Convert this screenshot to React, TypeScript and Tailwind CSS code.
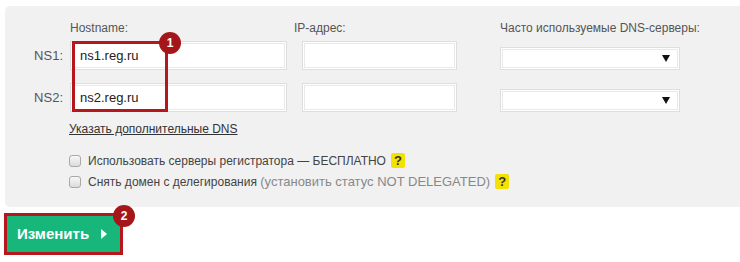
const font = { fontFamily: '"Liberation Sans", Arial, sans-serif' };

function TextInput({ w, value }: { w: string; value?: string }) {
  return (
    <div
      className={`${w} h-[29px] border border-[#dedede] bg-white shadow-[inset_0_0_0_1px_#fff,inset_0_0_0_2px_#e9e9e9] flex items-center pl-[9px] text-[13px] text-[#222]`}
    >
      {value}
    </div>
  );
}

function DnsSelect() {
  return (
    <div className="w-[180px] h-[23px] border border-[#dedede] bg-white shadow-[inset_0_0_0_1px_#fff,inset_0_0_0_2px_#e9e9e9] flex items-center justify-end pr-[9px]">
      <svg width="8" height="7" viewBox="0 0 8 7">
        <path d="M0 0 H8 L4 7 Z" fill="#111" />
      </svg>
    </div>
  );
}

function Badge({ n }: { n: string }) {
  return (
    <div className="w-[22px] h-[22px] rounded-full bg-[#a5161b] text-white text-[12px] font-bold flex items-center justify-center">
      {n}
    </div>
  );
}

function Help() {
  return (
    <span className="inline-flex items-center justify-center w-[14px] h-[15px] rounded-[2px] bg-[#f3e200] text-[#333] text-[13px] font-bold ml-[5px]">
      ?
    </span>
  );
}

function Check() {
  return (
    <span className="w-[12px] h-[12px] rounded-[3px] border border-[#a9a9a9] bg-gradient-to-b from-[#f7f7f7] to-[#dcdcdc] shrink-0" />
  );
}

export default function App() {
  return (
    <div className="relative w-[740px] h-[262px] bg-white pt-[6px] pl-[5px] overflow-hidden" style={font}>
      {/* DNS form panel */}
      <div className="relative h-[201px] w-[740px] rounded-l-[5px] bg-[#f1f1f1] pt-[15px]">
        <div className="flex h-[14px] items-center text-[12px] text-[#555]">
          <span className="ml-[65px] w-[224px]">Hostname:</span>
          <span className="w-[206px]">IP-адрес:</span>
          <span>Часто используемые DNS-серверы:</span>
        </div>

        <div className="mt-[6px] flex flex-col gap-[13px]">
          {[
            ["NS1:", "ns1.reg.ru"],
            ["NS2:", "ns2.reg.ru"],
          ].map(([label, host]) => (
            <div key={label} className="flex items-end">
              <div className="w-[65px] h-[29px] pr-[7px] flex items-center justify-end text-[13px] text-[#555]">
                {label}
              </div>
              <TextInput w="w-[217px]" value={host} />
              <div className="ml-[15px]">
                <TextInput w="w-[155px]" />
              </div>
              <div className="ml-[43px]">
                <DnsSelect />
              </div>
            </div>
          ))}
        </div>

        <div className="ml-[64px] mt-[10px] h-[14px] flex items-center text-[12px] text-[#333] underline">
          Указать дополнительные DNS
        </div>

        <div className="ml-[64px] mt-[14px] flex flex-col text-[12px] text-[#444]">
          <div className="h-[21px] flex items-center gap-[7px]">
            <Check />
            <span className="flex items-center">
              Использовать серверы регистратора — БЕСПЛАТНО
              <Help />
            </span>
          </div>
          <div className="h-[21px] flex items-center gap-[7px]">
            <Check />
            <span className="flex items-center">
              Снять домен с делегирования&nbsp;
              <span className="text-[13px] text-[#888]">(установить статус NOT DELEGATED)</span>
              <Help />
            </span>
          </div>
        </div>

        {/* annotation 1 */}
        <div className="absolute left-[67px] top-[35px] w-[96px] h-[71px] border-[3px] border-[#b5171c]" />
        <div className="absolute left-[154px] top-[26px]">
          <Badge n="1" />
        </div>
      </div>

      {/* submit */}
      <div className="relative mt-[6px] -ml-[1px] w-[119px] h-[42px] border-[3px] border-[#b5171c]">
        <div className="h-full bg-[#17b77c] flex items-center pl-[10px] text-white text-[15px] font-bold">
          Изменить
          <svg className="ml-[12px]" width="6" height="10" viewBox="0 0 6 10">
            <path d="M0 0 L6 5 L0 10 Z" fill="#fff" />
          </svg>
        </div>
        <div className="absolute -right-[15px] -top-[11px]">
          <Badge n="2" />
        </div>
      </div>
    </div>
  );
}
